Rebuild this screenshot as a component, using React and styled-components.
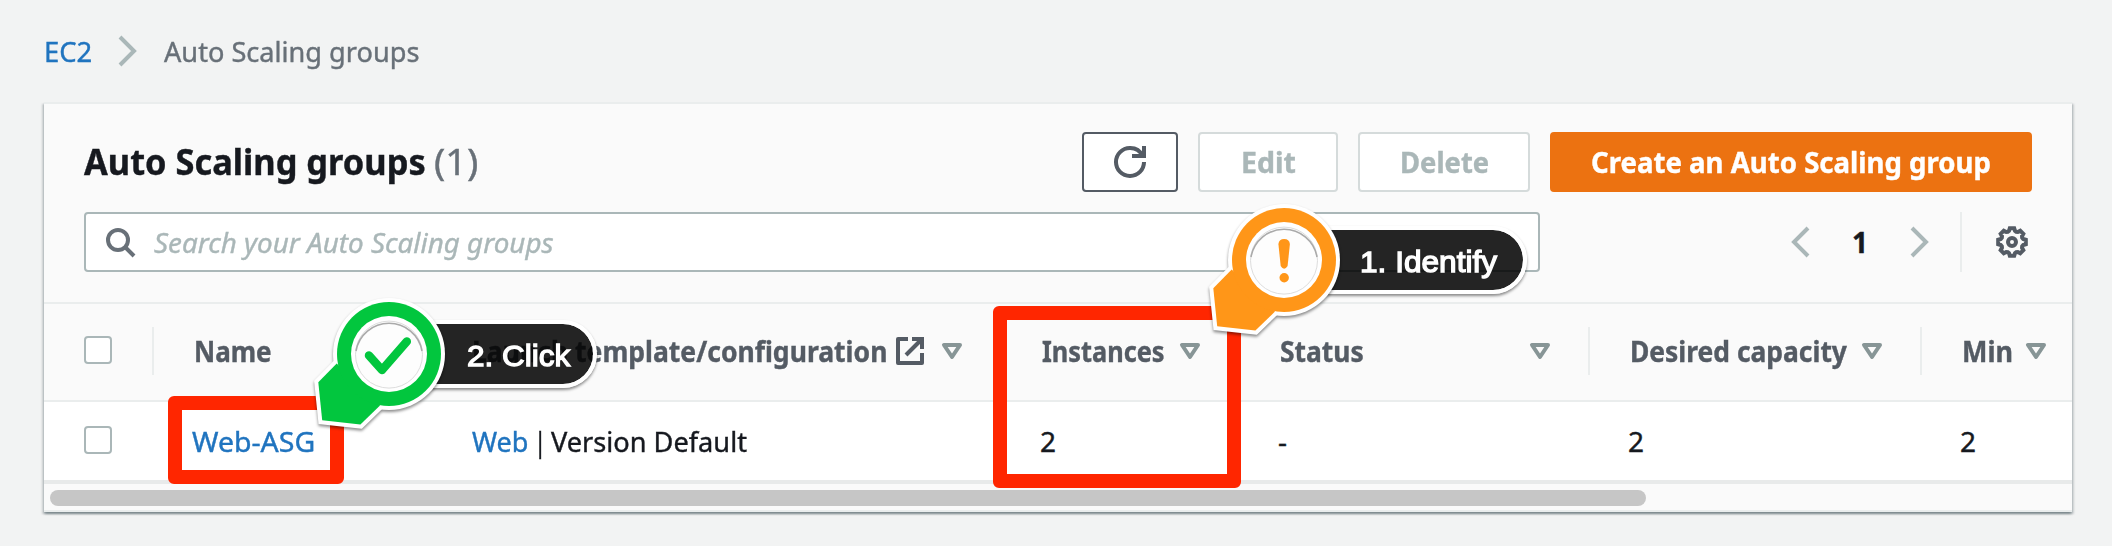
import React, { useLayoutEffect, useRef, useState } from "react";
import styled, { createGlobalStyle } from "styled-components";

const GlobalStyle = createGlobalStyle`
  * { box-sizing: border-box; }
  body {
    margin: 0;
    background: #f2f3f3;
    color: #16191f;
    font-family: "Noto Sans", "Open Sans", sans-serif;
    font-size: 28px;
    line-height: 44px;
    -webkit-text-stroke: 0.4px currentColor;
    overflow: hidden;
  }
`;

const c = {
  link: "#2074bf",
  muted: "#687078",
  dark: "#545b64",
  soft: "#aab7b8",
  line: "#eaeded",
  caret: "#879596",
};

const Measure = styled.span`
  display: inline-block;
  flex: none;
  white-space: nowrap;
  width: ${(p) => p.$width}px;
  margin-left: ${(p) => p.$inset || 0}px;
`;
const Glyphs = styled.span`
  display: inline-block;
  transform-origin: 0 50%;
`;

function Fit({ width, inset, children }) {
  const ref = useRef(null);
  const [scale, setScale] = useState(1);
  useLayoutEffect(() => {
    const update = () => setScale(width / ref.current.offsetWidth);
    update();
    document.fonts.ready.then(update);
  }, [width]);
  return (
    <Measure $width={width} $inset={inset}>
      <Glyphs ref={ref} style={{ transform: `scaleX(${scale})` }}>{children}</Glyphs>
    </Measure>
  );
}

const Icon = styled.svg.attrs({ viewBox: "0 0 16 16" })`
  display: block;
  flex: none;
  width: 32px;
  height: 32px;
  fill: none;
  stroke: ${(p) => p.$color || c.dark};
  stroke-width: 2;
`;
const ChevronRight = () => <Icon $color={c.soft}><path d="M4 1l7 7-7 7" /></Icon>;
const ChevronLeft = () => <Icon $color={c.soft}><path d="M12 1L5 8l7 7" /></Icon>;
const Caret = () => (
  <Icon $color={c.caret}><path strokeLinejoin="round" d="M4 5h8l-4 6-4-6z" /></Icon>
);
const Refresh = () => (
  <Icon>
    <path strokeLinecap="square" d="M10 5h5V0" />
    <path d="M15 8a6.957 6.957 0 0 1-7 7 6.957 6.957 0 0 1-7-7 6.957 6.957 0 0 1 7-7 6.87 6.87 0 0 1 6.3 4" />
  </Icon>
);
const SearchIcon = () => (
  <Icon $color={c.muted}>
    <circle cx="7" cy="7" r="5" />
    <path d="M15 15l-4.5-4.5" />
  </Icon>
);
const External = () => (
  <Icon>
    <path strokeLinecap="square" d="M10 2h4v4" />
    <path d="M6 10l8-8" />
    <path strokeLinejoin="round" d="M14 9.048V14H2V2h5" />
  </Icon>
);
const teeth = Array.from({ length: 8 }, (_, i) => {
  const at = (r, deg) => {
    const a = ((i * 45 + deg - 90) * Math.PI) / 180;
    return `${(8 + r * Math.cos(a)).toFixed(2)} ${(8 + r * Math.sin(a)).toFixed(2)}`;
  };
  return `${at(7, -9)}L${at(7, 9)}L${at(5.8, 15)}L${at(5.5, 22.5)}L${at(5.8, 30)}`;
}).join("L");
const Gear = () => (
  <Icon>
    <path d={`M${teeth}Z`} />
    <circle cx="8" cy="8" r="2" />
  </Icon>
);

const Page = styled.main`
  position: relative;
  width: 2112px;
  height: 546px;
  padding: 0 40px 0 44px;
  overflow: hidden;
`;
const Breadcrumbs = styled.nav`
  display: flex;
  align-items: center;
  height: 102px;
  gap: 20px;
  color: ${c.muted};
`;
const Link = styled.span`
  color: ${c.link};
`;
const Panel = styled.section`
  width: 2028px;
  height: 410px;
  border-top: 2px solid ${c.line};
  background: #fafafa;
  box-shadow: 0 2px 2px 0 rgba(0, 28, 36, 0.3), 2px 2px 2px 0 rgba(0, 28, 36, 0.15),
    -2px 2px 2px 0 rgba(0, 28, 36, 0.15);
`;
const Header = styled.header`
  display: flex;
  align-items: center;
  justify-content: space-between;
  padding: 28px 40px 0;
`;
const Title = styled.h1`
  display: flex;
  margin: 0;
  font-size: 36px;
  line-height: 60px;
  font-weight: 700;
`;
const Count = styled.span`
  color: ${c.muted};
  font-weight: 400;
`;
const Actions = styled.div`
  display: flex;
  gap: 20px;
`;
const tones = {
  normal: [c.dark, "#fff", c.dark],
  disabled: ["#d5dbdb", "#fff", c.soft],
  primary: ["#ec7211", "#ec7211", "#fff"],
};
const Button = styled.button`
  display: flex;
  align-items: center;
  justify-content: center;
  height: 60px;
  width: ${(p) => p.$width}px;
  padding: 0;
  border: 2px solid ${(p) => tones[p.$tone][0]};
  border-radius: 4px;
  background: ${(p) => tones[p.$tone][1]};
  color: ${(p) => tones[p.$tone][2]};
  font: inherit;
  font-weight: 700;
  -webkit-text-stroke: 0.4px currentColor;
`;
const Filters = styled.div`
  display: flex;
  align-items: center;
  padding: 20px 40px 30px;
`;
const Search = styled.div`
  display: flex;
  align-items: center;
  gap: 18px;
  width: 1456px;
  height: 60px;
  margin-right: 244px;
  padding-left: 18px;
  border: 2px solid ${c.soft};
  border-radius: 4px;
  background: #fff;
  color: ${c.soft};
  font-style: italic;
`;
const PageNumber = styled.strong`
  width: 88px;
  text-align: center;
`;
const Preferences = styled.div`
  display: flex;
  align-items: center;
  height: 60px;
  margin-left: 24px;
  padding-left: 34px;
  border-left: 2px solid ${c.line};
`;
const Row = styled.div`
  display: grid;
  grid-template-columns: 110px 280px 568px 238px 350px 332px 150px;
  align-items: center;
  height: ${(p) => (p.$head ? 100 : 78)}px;
  border-top: ${(p) => (p.$head ? `2px solid ${c.line}` : 0)};
  border-bottom: ${(p) => (p.$head ? `2px solid ${c.line}` : 0)};
  background: ${(p) => (p.$head ? "#fafafa" : "#fff")};
`;
const HeadCell = styled.div`
  display: flex;
  align-items: center;
  height: 48px;
  margin-bottom: 2px;
  padding: 0 ${(p) => p.$end ?? 32}px 0 38px;
  border-right: ${(p) => (p.$last ? 0 : 2)}px solid ${c.line};
  color: ${c.dark};
  font-weight: 700;
  > :last-child { margin-left: auto; }
`;
const LaunchHeading = styled.span`
  display: flex;
  align-items: center;
  gap: 7px;
`;
const Cell = styled.div`
  display: flex;
  padding-left: 38px;
`;
const CheckCell = styled.div`
  display: flex;
  align-items: center;
  height: 48px;
  margin-bottom: ${(p) => (p.$divided ? 2 : 0)}px;
  padding-left: 40px;
  border-right: ${(p) => (p.$divided ? `2px solid ${c.line}` : 0)};
`;
const Checkbox = styled.span`
  width: 28px;
  height: 28px;
  margin-bottom: 2px;
  border: 2px solid ${c.soft};
  border-radius: 4px;
  background: #fff;
`;
const ScrollTrack = styled.div`
  height: 32px;
  padding: 6px;
  border-top: 4px solid #e8eaea;
  border-bottom: 2px solid ${c.line};
`;
const ScrollThumb = styled.div`
  width: 1596px;
  height: 16px;
  border-radius: 8px;
  background: #c6c6c6;
`;

/* Annotations that float over the table. */
const Highlight = styled.div`
  position: absolute;
  left: ${(p) => p.$x}px;
  top: ${(p) => p.$y}px;
  width: ${(p) => p.$w}px;
  height: ${(p) => p.$h}px;
  border: 14px solid #ff2600;
  border-radius: 6px;
`;
const Pin = styled.div`
  position: absolute;
  left: ${(p) => p.$x}px;
  top: ${(p) => p.$y}px;
`;
const PinArt = styled.svg`
  position: absolute;
  left: -80px;
  top: -64px;
  width: 150px;
  height: 150px;
  overflow: visible;
`;
const PinLabel = styled.div`
  position: absolute;
  left: 0;
  top: -34px;
  width: ${(p) => p.$width}px;
  height: 68px;
  padding-left: ${(p) => p.$pad}px;
  border: 4px solid #fff;
  border-radius: 34px;
  background: rgba(0, 0, 0, 0.86) padding-box;
  box-shadow: 0 2px 3px rgba(0, 0, 0, 0.45);
  color: #fff;
  font-family: "Liberation Sans", Arial, sans-serif;
  font-size: 30px;
  line-height: 63px;
  -webkit-text-stroke: 1.3px #fff;
`;
const tail = "M-52.3 9.6L-70.7 28.3L-66.8 66.3L-28.6 70.6L-9 51.6Z";

function Marker({ x, y, color, width, pad, label, labelWidth, children }) {
  return (
    <Pin $x={x} $y={y}>
      <PinLabel $width={width} $pad={pad}><Fit width={labelWidth}>{label}</Fit></PinLabel>
      <PinArt viewBox="-80 -64 150 150">
        <g filter="drop-shadow(0 2px 1.5px rgba(0,0,0,.45))">
          <path d={tail} fill="#fff" stroke="#fff" strokeWidth="8" />
          <circle r="56" fill="#fff" />
        </g>
        <path d={tail} fill={color} />
        <circle r="52" fill={color} />
        <circle r="38" fill="#fff" />
        <circle r="33.5" cy="0.6" fill="#fdfdfd" stroke="#ddd" strokeWidth="1" />
        <path d="M-33 -3A33.5 33.5 0 0 1 33 -3" fill="none" stroke="#aaa" strokeWidth="1.6" />
        {children}
      </PinArt>
    </Pin>
  );
}

export default function App() {
  return (
    <Page>
      <GlobalStyle />
      <Breadcrumbs>
        <Link><Fit width={48}>EC2</Fit></Link>
        <ChevronRight />
        <Fit width={255}>Auto Scaling groups</Fit>
      </Breadcrumbs>

      <Panel>
        <Header>
          <Title>
            <Fit width={342}>Auto Scaling groups</Fit>
            <Count><Fit width={44} inset={8}>(1)</Fit></Count>
          </Title>
          <Actions>
            <Button $tone="normal" $width={96} aria-label="Refresh"><Refresh /></Button>
            <Button $tone="disabled" $width={140}><Fit width={55}>Edit</Fit></Button>
            <Button $tone="disabled" $width={172}><Fit width={89}>Delete</Fit></Button>
            <Button $tone="primary" $width={482}><Fit width={400}>Create an Auto Scaling group</Fit></Button>
          </Actions>
        </Header>

        <Filters>
          <Search>
            <SearchIcon />
            <Fit width={400}>Search your Auto Scaling groups</Fit>
          </Search>
          <ChevronLeft />
          <PageNumber>1</PageNumber>
          <ChevronRight />
          <Preferences><Gear /></Preferences>
        </Filters>

        <Row $head>
          <CheckCell $divided><Checkbox /></CheckCell>
          <HeadCell><Fit width={78} inset={2}>Name</Fit><Caret /></HeadCell>
          <HeadCell>
            <LaunchHeading>
              <Fit width={415}>Launch template/configuration</Fit>
              <External />
            </LaunchHeading>
            <Caret />
          </HeadCell>
          <HeadCell><Fit width={123} inset={2}>Instances</Fit><Caret /></HeadCell>
          <HeadCell><Fit width={84} inset={2}>Status</Fit><Caret /></HeadCell>
          <HeadCell><Fit width={217} inset={2}>Desired capacity</Fit><Caret /></HeadCell>
          <HeadCell $last $end={20}><Fit width={51} inset={2}>Min</Fit><Caret /></HeadCell>
        </Row>
        <Row>
          <CheckCell><Checkbox /></CheckCell>
          <Cell><Link><Fit width={123}>Web-ASG</Fit></Link></Cell>
          <Cell>
            <Link><Fit width={57}>Web</Fit></Link>
            <Fit width={12} inset={5}>|</Fit>
            <Fit width={196} inset={5}>Version Default</Fit>
          </Cell>
          <Cell>2</Cell>
          <Cell>-</Cell>
          <Cell>2</Cell>
          <Cell>2</Cell>
        </Row>
        <ScrollTrack><ScrollThumb /></ScrollTrack>
      </Panel>

      <Highlight $x={168} $y={396} $w={176} $h={88} />
      <Highlight $x={993} $y={306} $w={248} $h={182} />

      <Marker x={388.5} y={354} color="#02c63e" width={208.5} pad={74} label="2. Click" labelWidth={103}>
        <path d="M-20 1.5L-7 16L17.8 -12.5" fill="none" stroke="#02c63e" strokeWidth="8.5" strokeLinecap="round" strokeLinejoin="round" />
      </Marker>
      <Marker x={1284.3} y={260} color="#ff9618" width={242.7} pad={72} label="1. Identify" labelWidth={137}>
        <path d="M-5.6 -16A5.8 5.8 0 0 1 5.9 -16L3.6 6Q0.1 11.5 -3.3 6Z" fill="#ff9618" />
        <circle cx="0.2" cy="17.8" r="4.7" fill="#ff9618" />
      </Marker>
    </Page>
  );
}
